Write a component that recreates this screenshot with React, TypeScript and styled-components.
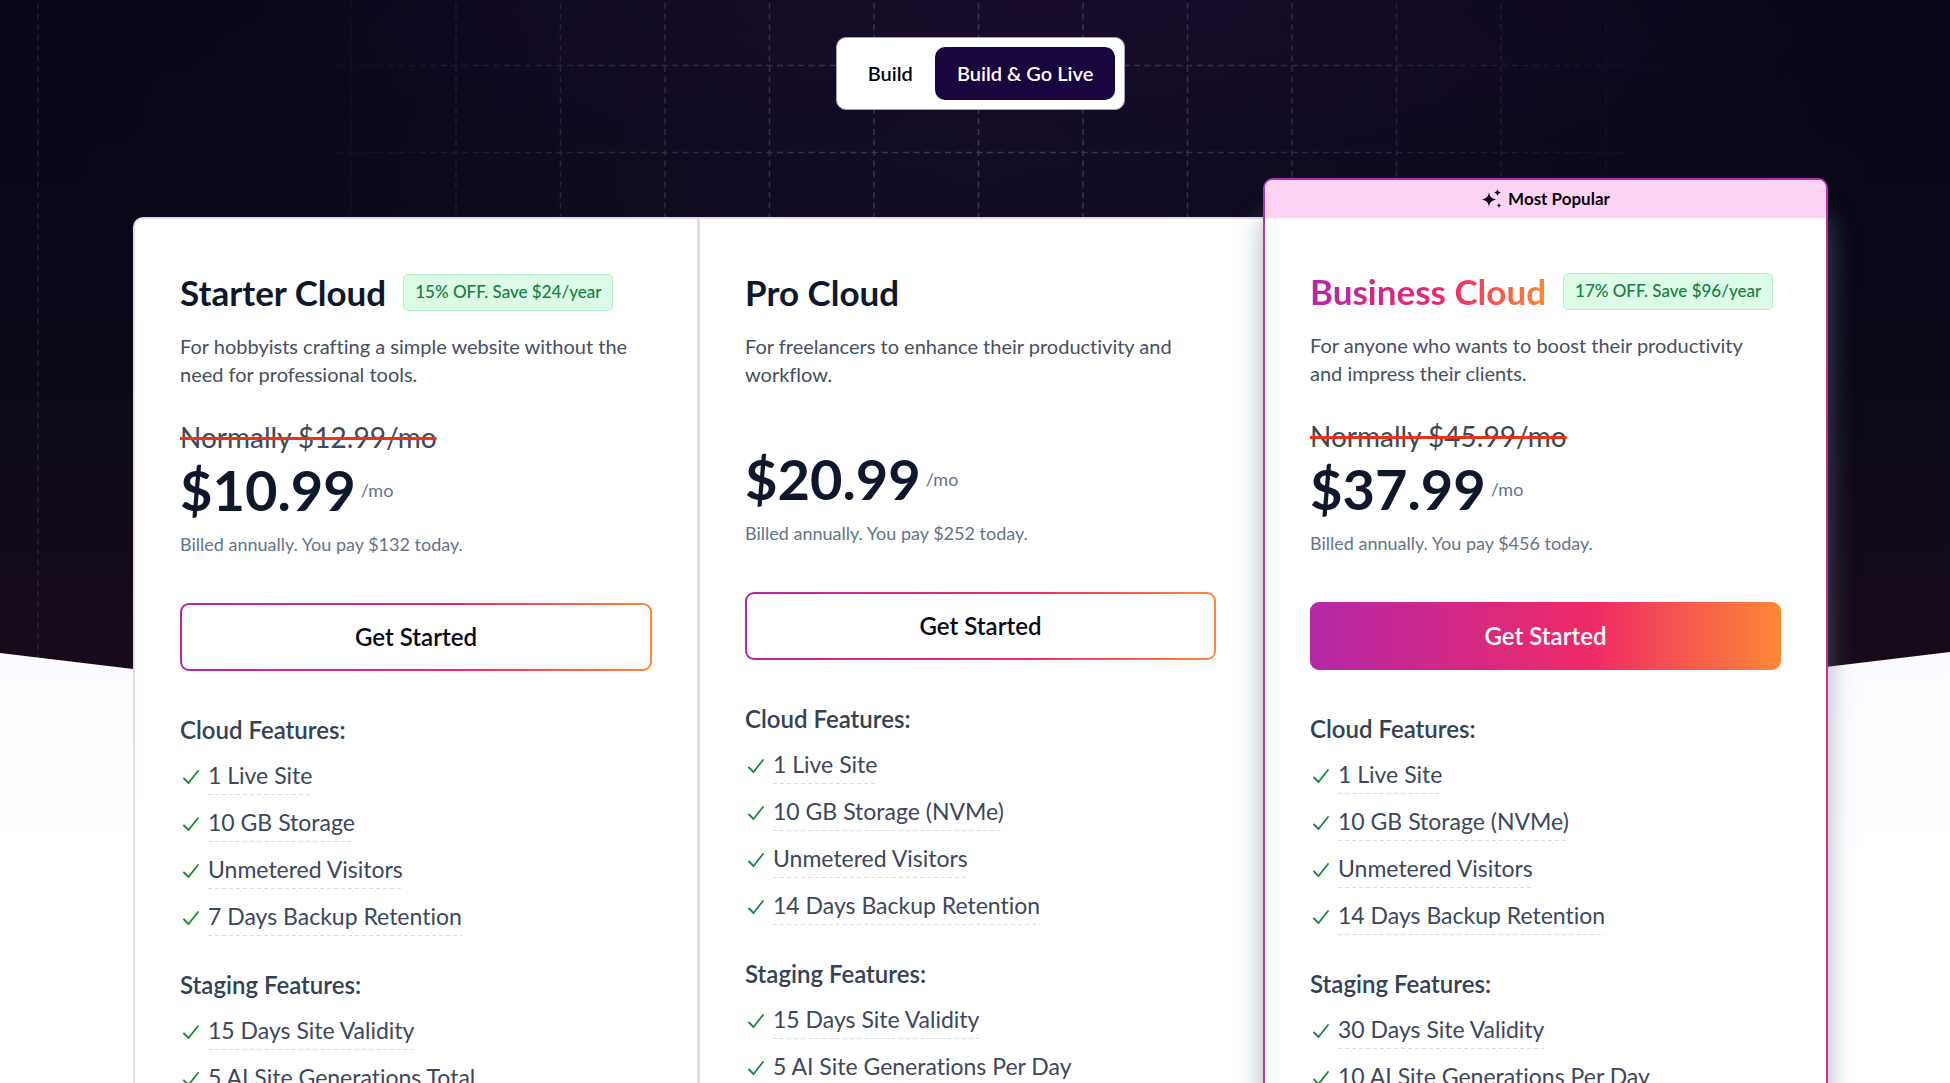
import React from "react";
import styled, { createGlobalStyle, css } from "styled-components";

const GlobalStyle = createGlobalStyle`
  *, *::before, *::after { box-sizing: border-box; }
  html, body { margin: 0; padding: 0; height: 100%; overflow: hidden; }
  #root { height: 100%; }
  body {
    font-family: Lato, "Open Sans", sans-serif;
    font-variant-ligatures: none;
    background: #fff;
    color: #0f172a;
  }
  h2, h3, p, ul { margin: 0; padding: 0; }
`;

const brandGradient = "linear-gradient(90deg, #b527a8 0%, #ef2a66 60%, #fd8835 100%)";

const Page = styled.div`
  position: relative;
  height: 100%;
  overflow: hidden;
  background: linear-gradient(180deg, #fff 0, #fff 640px, #fcfbff 660px, #fff 860px);
`;

const Backdrop = styled.div`
  position: absolute;
  inset: 0 0 auto 0;
  height: 770px;
  clip-path: polygon(0 0, 100% 0, 100% 652px, 50% 100%, 0 653px);
  background:
    radial-gradient(ellipse 800px 180px at 54% 0, rgba(27, 12, 45, 0.7), rgba(27, 12, 45, 0) 100%),
    radial-gradient(ellipse 900px 500px at 50% 20%, #120c25, rgba(10, 8, 24, 0) 100%),
    linear-gradient(180deg, #080619 0%, #0a0918 45%, #170b1a 85%);
`;

const GridLines = styled.svg`
  position: absolute;
  inset: 0;
  width: 100%;
  height: 100%;
`;

const Content = styled.main`
  position: relative;
  padding: 37px 122px 0 133px;
  display: flex;
  flex-direction: column;
  align-items: center;
`;

const Toggle = styled.div`
  display: flex;
  padding: 9px;
  border: 1px solid #a3a5b5;
  border-radius: 10px;
  background: #fff;
`;

const ToggleButton = styled.button<{ $active?: boolean }>`
  height: 53px;
  padding: 0 22px 2px;
  border: 0;
  border-radius: 10px;
  font: 600 20px/28px Lato, sans-serif;
  background: ${(p) => (p.$active ? "#1a063f" : "transparent")};
  color: ${(p) => (p.$active ? "#fff" : "#05030f")};
  cursor: pointer;
`;

const Plans = styled.section`
  width: 100%;
  margin-top: 107px;
  display: grid;
  grid-template-columns: repeat(3, 1fr);
`;

const Card = styled.article<{ $kind: "first" | "middle" | "popular" }>`
  padding: 0 45px 120px;
  background: #fff;
  border: 2px solid #e6d9ec;
  ${(p) => p.$kind === "first" && css`border-radius: 10px 0 0 0; border-right-width: 1px;`}
  ${(p) => p.$kind === "middle" && css`border-right: 0; padding-right: 47px;`}
  ${(p) =>
    p.$kind === "popular" &&
    css`
      margin-top: -39px;
      border-color: #b832ab;
      border-radius: 10px 10px 0 0;
      box-shadow: 0 40px 24px 2px rgba(110, 124, 148, 0.5);
    `}
`;

const PopularBand = styled.div`
  height: 38px;
  margin: 0 -45px;
  display: flex;
  align-items: center;
  justify-content: center;
  gap: 5px;
  border-radius: 8px 8px 0 0;
  background: #fdd3f4;
  color: #07040f;
  font-size: 17px;
  line-height: 24px;
  font-weight: 700;
`;

const CardBody = styled.div`
  padding-top: 52px;
`;

const TitleRow = styled.div`
  display: flex;
  align-items: center;
  gap: 17px;
  height: 42px;
`;

const Title = styled.h2<{ $brand: boolean }>`
  font-size: 35px;
  line-height: 42px;
  font-weight: 700;
  white-space: nowrap;
  ${(p) =>
    p.$brand &&
    css`
      background: ${brandGradient};
      background-clip: text;
      -webkit-background-clip: text;
      color: transparent;
    `}
`;

const Discount = styled.span`
  height: 37px;
  padding: 0 11px;
  display: flex;
  align-items: center;
  border: 1px solid #bbf0cf;
  border-radius: 5px;
  background: #dcfce7;
  color: #15803d;
  font-size: 17px;
  line-height: 24px;
  font-weight: 500;
  white-space: nowrap;
`;

const Description = styled.p`
  margin-top: 19px;
  height: 56px;
  padding-right: 12px;
  font-size: 20px;
  line-height: 28px;
  color: #46505f;
`;

const Prices = styled.div<{ $discounted: boolean }>`
  margin-top: 33px;
  padding-top: ${(p) => (p.$discounted ? 0 : 22)}px;
`;

const OldPrice = styled.s`
  display: block;
  height: 33px;
  font-size: 28px;
  line-height: 33px;
  color: #3f4856;
  text-decoration: line-through #ef3118 3px;
`;

const PriceRow = styled.p`
  display: flex;
  align-items: center;
  gap: 5px;
  height: 72px;
`;

const Price = styled.strong`
  font-size: 56px;
  line-height: 72px;
  font-weight: 700;
  color: #0f172a;
`;

const Period = styled.span`
  font-size: 18px;
  line-height: 28px;
  color: #64748b;
`;

const Billing = styled.p`
  margin-top: 4px;
  font-size: 18px;
  line-height: 28px;
  color: #64748b;
`;

const CtaButton = styled.button<{ $filled: boolean }>`
  display: block;
  width: 100%;
  height: 68px;
  margin-top: 45px;
  border: 2px solid transparent;
  border-radius: 9px;
  font: 600 24px/32px Lato, sans-serif;
  cursor: pointer;
  color: ${(p) => (p.$filled ? "#fff" : "#080818")};
  background: ${(p) =>
    p.$filled
      ? `${brandGradient} border-box`
      : `linear-gradient(#fff, #fff) padding-box, ${brandGradient} border-box`};
`;

const FeatureGroup = styled.section<{ $first?: boolean }>`
  padding-top: ${(p) => (p.$first ? 43 : 28)}px;
`;

const GroupTitle = styled.h3`
  font-size: 24px;
  line-height: 32px;
  font-weight: 600;
  color: #334155;
  margin-bottom: 7px;
`;

const FeatureList = styled.ul`
  list-style: none;
`;

const Feature = styled.li`
  display: flex;
  align-items: center;
  gap: 8px;
  height: 47px;
  padding-left: 2px;
`;

const FeatureText = styled.span`
  height: 36px;
  background: repeating-linear-gradient(90deg, #dadde3 0 4px, transparent 4px 7px) left bottom / 100% 1px no-repeat;
  font-size: 23px;
  line-height: 32px;
  color: #3c475b;
  white-space: nowrap;
`;

const Check = () => (
  <svg width="18" height="18" viewBox="0 0 18 18" fill="none" aria-hidden="true">
    <path d="M2 10.5 6.5 15 16 3" stroke="#15883d" strokeWidth="1.8" strokeLinecap="round" strokeLinejoin="round" />
  </svg>
);

const Sparkles = () => (
  <svg width="22" height="22" viewBox="0 0 22 22" fill="#07040f" aria-hidden="true">
    <path d="M8 4.5C9 9 10.5 10.5 15 11.5 10.5 12.5 9 14 8 18.5 7 14 5.5 12.5 1 11.5 5.500 10.500 7 9 8 4.500Z" />
    <path d="M16.500 1C17.100 3.200 17.800 3.900 20 4.500 17.800 5.100 17.100 5.800 16.500 8 15.900 5.800 15.200 5.100 13 4.500 15.200 3.900 15.900 3.200 16.500 1Z" />
    <path d="M18 15C18.400 16.700 18.800 17.100 20.500 17.500 18.800 17.900 18.400 18.300 18 20 17.600 18.300 17.200 17.900 15.500 17.500 17.200 17.100 17.600 16.700 18 15Z" />
  </svg>
);

type Plan = {
  kind: "first" | "middle" | "popular";
  name: string;
  discount?: string;
  description: string;
  oldPrice?: string;
  price: string;
  billing: string;
  groups: { title: string; items: string[] }[];
};

const plans: Plan[] = [
  {
    kind: "first",
    name: "Starter Cloud",
    discount: "15% OFF. Save $24/year",
    description: "For hobbyists crafting a simple website without the need for professional tools.",
    oldPrice: "Normally $12.99/mo",
    price: "$10.99",
    billing: "Billed annually. You pay $132 today.",
    groups: [
      { title: "Cloud Features:", items: ["1 Live Site", "10 GB Storage", "Unmetered Visitors", "7 Days Backup Retention"] },
      { title: "Staging Features:", items: ["15 Days Site Validity", "5 AI Site Generations Total"] },
    ],
  },
  {
    kind: "middle",
    name: "Pro Cloud",
    description: "For freelancers to enhance their productivity and workflow.",
    price: "$20.99",
    billing: "Billed annually. You pay $252 today.",
    groups: [
      { title: "Cloud Features:", items: ["1 Live Site", "10 GB Storage (NVMe)", "Unmetered Visitors", "14 Days Backup Retention"] },
      { title: "Staging Features:", items: ["15 Days Site Validity", "5 AI Site Generations Per Day"] },
    ],
  },
  {
    kind: "popular",
    name: "Business Cloud",
    discount: "17% OFF. Save $96/year",
    description: "For anyone who wants to boost their productivity and impress their clients.",
    oldPrice: "Normally $45.99/mo",
    price: "$37.99",
    billing: "Billed annually. You pay $456 today.",
    groups: [
      { title: "Cloud Features:", items: ["1 Live Site", "10 GB Storage (NVMe)", "Unmetered Visitors", "14 Days Backup Retention"] },
      { title: "Staging Features:", items: ["30 Days Site Validity", "10 AI Site Generations Per Day"] },
    ],
  },
];

const columns = Array.from({ length: 18 }, (_, i) => 38 + i * 104.5);

const Background = () => (
  <Backdrop>
    <GridLines aria-hidden="true">
      <defs>
        <radialGradient id="fade" gradientUnits="userSpaceOnUse" cx="979" cy="130" r="780">
          <stop offset="0" stopColor="#fff" stopOpacity="0.24" />
          <stop offset="0.5" stopColor="#fff" stopOpacity="0.15" />
          <stop offset="0.95" stopColor="#fff" stopOpacity="0" />
        </radialGradient>
        <mask id="gridMask" maskUnits="userSpaceOnUse" x="0" y="0" width="100%" height="100%">
          <rect width="100%" height="100%" fill="url(#fade)" />
        </mask>
      </defs>
      <g mask="url(#gridMask)" stroke="#cfcbe6" strokeWidth="1.500" strokeDasharray="6 4.500">
        {columns.map((x) => (
          <line key={x} x1={x} x2={x} y1="3" y2="770" />
        ))}
        <line x1="0" x2="100%" y1="65.500" y2="65.500" />
        <line x1="0" x2="100%" y1="152.500" y2="152.500" />
      </g>
      <line x1="38" x2="38" y1="3" y2="770" stroke="#cfcbe6" strokeOpacity="0.13" strokeWidth="1.500" strokeDasharray="6 4.500" />
    </GridLines>
  </Backdrop>
);

const PlanCard = ({ plan }: { plan: Plan }) => {
  const popular = plan.kind === "popular";
  return (
    <Card $kind={plan.kind}>
      {popular && (
        <PopularBand>
          <Sparkles />
          Most Popular
        </PopularBand>
      )}
      <CardBody>
        <TitleRow>
          <Title $brand={popular}>{plan.name}</Title>
          {plan.discount && <Discount>{plan.discount}</Discount>}
        </TitleRow>
        <Description>{plan.description}</Description>
        <Prices $discounted={Boolean(plan.oldPrice)}>
          {plan.oldPrice && <OldPrice>{plan.oldPrice}</OldPrice>}
          <PriceRow>
            <Price>{plan.price}</Price>
            <Period>/mo</Period>
          </PriceRow>
          <Billing>{plan.billing}</Billing>
        </Prices>
        <CtaButton type="button" $filled={popular}>Get Started</CtaButton>
        {plan.groups.map((group, i) => (
          <FeatureGroup key={group.title} $first={i === 0}>
            <GroupTitle>{group.title}</GroupTitle>
            <FeatureList>
              {group.items.map((item) => (
                <Feature key={item}>
                  <Check />
                  <FeatureText>{item}</FeatureText>
                </Feature>
              ))}
            </FeatureList>
          </FeatureGroup>
        ))}
      </CardBody>
    </Card>
  );
};

export default function App() {
  return (
    <>
      <GlobalStyle />
      <Page>
        <Background />
        <Content>
          <Toggle role="group" aria-label="Plan type">
            <ToggleButton type="button" aria-pressed="false">Build</ToggleButton>
            <ToggleButton type="button" aria-pressed="true" $active>Build &amp; Go Live</ToggleButton>
          </Toggle>
          <Plans>
            {plans.map((plan) => (
              <PlanCard key={plan.name} plan={plan} />
            ))}
          </Plans>
        </Content>
      </Page>
    </>
  );
}
